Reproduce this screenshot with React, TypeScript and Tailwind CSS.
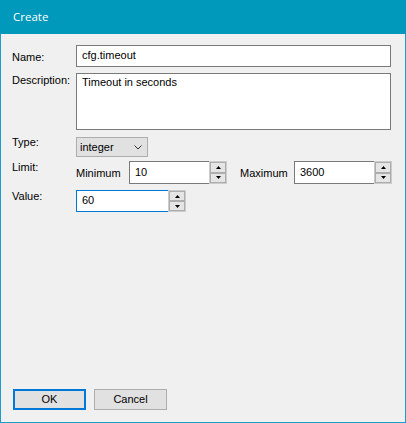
import React from "react";

const Up = () => (
  <svg width="5" height="3" viewBox="0 0 5 3" className="block">
    <polygon points="2.5,0 5,3 0,3" fill="#000" />
  </svg>
);
const Down = () => (
  <svg width="5" height="3" viewBox="0 0 5 3" className="block">
    <polygon points="0,0 5,0 2.5,3" fill="#000" />
  </svg>
);

function Spinner() {
  return (
    <div className="flex h-full w-[18px] flex-col border border-[#cccccc] bg-[#f0f0f0]">
      <div className="flex flex-1 items-center justify-center border border-[#adadad] bg-[#e5e5e5]">
        <Up />
      </div>
      <div className="flex flex-1 items-center justify-center border border-[#adadad] bg-[#e5e5e5]">
        <Down />
      </div>
    </div>
  );
}

function Numeric({
  value,
  width,
  height,
  focused,
}: {
  value: string;
  width: string;
  height: string;
  focused?: boolean;
}) {
  return (
    <div className={`flex ${width} ${height}`}>
      <div
        className={`flex flex-1 items-center border-y border-l bg-white pl-[5px] ${
          focused ? "border-[#0078d7] pb-[2px]" : "border-[#7a7a7a]"
        }`}
      >
        {value}
      </div>
      <Spinner />
    </div>
  );
}

export default function App() {
  return (
    <div
      className="flex h-[423px] w-[406px] flex-col border-x border-b border-[#1a9ec6] bg-[#f0f0f0] text-[11px] leading-[13px] text-black"
      style={{ fontFamily: '"Liberation Sans", Arial, sans-serif' }}
    >
      <div
        className="-mx-px flex h-[34px] shrink-0 items-center bg-[#0099bc] pl-[13px] pb-[1px] text-[11.5px] text-white"
        style={{ fontFamily: '"Open Sans", "Noto Sans", sans-serif' }}
      >
        Create
      </div>

      <div className="flex flex-col pl-[11px]">
        {/* Name */}
        <div className="mt-[11px] flex items-start">
          <div className="w-[64px] pt-[6px]">Name:</div>
          <div className="flex h-[22px] w-[315px] items-center border border-[#7a7a7a] bg-white pl-[5px] pb-[2px]">
            cfg.timeout
          </div>
        </div>

        {/* Description */}
        <div className="mt-[6px] flex items-start">
          <div className="w-[64px] pt-[1px]">Description:</div>
          <div className="h-[57px] w-[315px] border border-[#7a7a7a] bg-white pl-[5px] pt-[2px]">
            Timeout in seconds
          </div>
        </div>

        {/* Type */}
        <div className="mt-[7px] flex items-start">
          <div className="-mt-px w-[64px]">Type:</div>
          <div className="flex h-[20px] w-[72px] items-center justify-between border border-[#adadad] bg-[#e1e1e1] pl-[3px] pr-[5px]">
            <span>integer</span>
            <svg width="8" height="5" viewBox="0 0 8 5" className="block">
              <polyline points="0.5,0.5 4,4 7.5,0.5" fill="none" stroke="#333" strokeWidth="1" />
            </svg>
          </div>
        </div>

        {/* Limit */}
        <div className="mt-[4px] flex items-start">
          <div className="w-[64px]">Limit:</div>
          <div className="w-[53px] pt-[6px]">Minimum</div>
          <Numeric value="10" width="w-[98px]" height="h-[23px]" />
          <div className="ml-[13px] w-[54px] pt-[6px]">Maximum</div>
          <Numeric value="3600" width="w-[98px]" height="h-[23px]" />
        </div>

        {/* Value */}
        <div className="mt-[6px] flex items-start">
          <div className="w-[64px]">Value:</div>
          <Numeric value="60" width="w-[110px]" height="h-[22px]" focused />
        </div>
      </div>

      <div className="flex-1" />

      <div className="flex gap-[8px] pb-[12px] pl-[12px]">
        <div className="flex h-[21px] w-[73px] items-center justify-center border-2 border-[#0078d7] bg-[#e1e1e1]">
          OK
        </div>
        <div className="flex h-[21px] w-[73px] items-center justify-center border border-[#adadad] bg-[#e1e1e1]">
          Cancel
        </div>
      </div>
    </div>
  );
}
